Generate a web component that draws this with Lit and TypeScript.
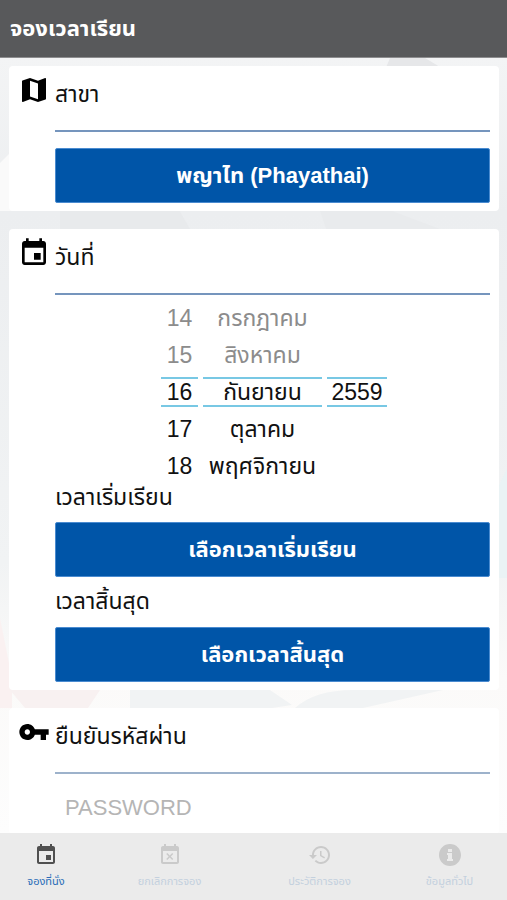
import { LitElement, html, css, svg } from "lit";
import { customElement, state } from "lit/decorators.js";
import { classMap } from "lit/directives/class-map.js";

const icons = {
  map: svg`<path d="M20.5 3l-.16.03L15 5.1 9 3 3.36 4.9c-.21.07-.36.25-.36.48V20.5c0 .28.22.5.5.5l.16-.03L9 18.9l6 2.1 5.640-1.900c.21-.07.36-.25.36-.48V3.500c0-.28-.22-.5-.5-.5zM15 19l-6-2.110V5l6 2.110V19z"/>`,
  event: svg`<path d="M17 12h-5v5h5v-5zM16 1v2H8V1H6v2H5c-1.110 0-1.990.9-1.990 2L3 19c0 1.100.89 2 2 2h14c1.100 0 2-.9 2-2V5c0-1.100-.9-2-2-2h-1V1h-2zm3 18H5V8h14v11z"/>`,
  key: svg`<path d="M12.650 10C11.830 7.670 9.610 6 7 6c-3.310 0-6 2.690-6 6s2.690 6 6 6c2.610 0 4.830-1.670 5.650-4H17v4h4v-4h2v-4H12.650zM7 14c-1.100 0-2-.9-2-2s.9-2 2-2 2 .9 2 2-.9 2-2 2z"/>`,
  busy: svg`<path d="M9.310 17l2.440-2.440L14.190 17l1.060-1.060-2.440-2.440 2.440-2.440L14.190 10l-2.440 2.440L9.310 10l-1.060 1.060 2.440 2.440-2.440 2.440L9.310 17zM19 3h-1V1h-2v2H8V1H6v2H5c-1.110 0-1.990.9-1.990 2L3 19c0 1.100.89 2 2 2h14c1.100 0 2-.9 2-2V5c0-1.100-.9-2-2-2zm0 16H5V8h14v11z"/>`,
  history: svg`<path d="M13 3c-4.970 0-9 4.030-9 9H1l3.890 3.890.07.14L9 12H6c0-3.870 3.130-7 7-7s7 3.130 7 7-3.130 7-7 7c-1.930 0-3.680-.79-4.940-2.060l-1.420 1.420C8.270 19.990 10.510 21 13 21c4.970 0 9-4.030 9-9s-4.030-9-9-9zm-1 5v5l4.280 2.540.72-1.210-3.500-2.080V8H12z"/>`,
  info: svg`<path d="M12 1C5.900 1 1 5.900 1 12s4.900 11 11 11 11-4.900 11-11S18.100 1 12 1zm-2 5h4v3h-4V6zm5 12H9v-2h1v-4H9v-2h5v6h1v2z"/>`,
};

const icon = (name: keyof typeof icons) =>
  html`<svg class="icon" viewBox="0 0 24 24" aria-hidden="true">${icons[name]}</svg>`;

const days = ["14", "15", "16", "17", "18"];
const months = ["กรกฎาคม", "สิงหาคม", "กันยายน", "ตุลาคม", "พฤศจิกายน"];
const years = ["", "", "2559", "", ""];

const tabs: { icon: keyof typeof icons; label: string }[] = [
  { icon: "event", label: "จองที่นั่ง" },
  { icon: "busy", label: "ยกเลิกการจอง" },
  { icon: "history", label: "ประวัติการจอง" },
  { icon: "info", label: "ข้อมูลทั่วไป" },
];

@customElement("app-root")
export class AppRoot extends LitElement {
  @state() private tab = 0;

  static styles = css`
    * {
      box-sizing: border-box;
    }
    :host {
      display: flex;
      flex-direction: column;
      height: 100vh;
      overflow: hidden;
      color: #111;
      background: #fdfdfd;
      font-family: "Liberation Sans", "Noto Sans Thai", sans-serif;
      font-size: 23px;
      line-height: 32px;
    }
    .bar {
      flex: none;
      height: 58px;
      display: flex;
      align-items: center;
      padding: 0 10px;
      background: #58595b;
      border-bottom: 1px solid #8d8d8f;
      color: #fff;
    }
    h1,
    h2 {
      margin: 0;
      font-size: 23px;
      font-weight: 400;
    }
    h1 {
      font-size: 22px;
      font-weight: 700;
    }
    .page {
      flex: 1;
      min-height: 0;
      position: relative;
      overflow: hidden;
    }
    .backdrop {
      position: absolute;
      inset: 0;
      width: 100%;
      height: 100%;
    }
    .cards {
      position: relative;
      display: flex;
      flex-direction: column;
      gap: 18px;
      padding: 8px 8px 0 9px;
    }
    .card {
      display: grid;
      grid-template-columns: 46px minmax(0, 1fr);
      padding: 8px 9px 8px 0;
      border-radius: 4px;
      background: #fff;
    }
    .card > .icon {
      width: 32px;
      height: 32px;
      margin-left: 9px;
      fill: #000;
    }
    .body {
      display: flex;
      flex-direction: column;
    }
    .head {
      height: 58px;
      margin-bottom: 16px;
      padding-top: 4px;
      border-bottom: 2px solid #7595bd;
    }
    .head.soft {
      border-bottom-color: #9db2cb;
    }
    .action {
      height: 55px;
      border: 1px solid #4a8bd0;
      border-radius: 2px;
      background: #0055a8;
      color: #fff;
      font: inherit;
      font-size: 22px;
      font-weight: 700;
      cursor: pointer;
    }
    .picker {
      display: flex;
      justify-content: center;
      gap: 5px;
      margin-top: -8px;
      padding-left: 3px;
    }
    .wheel {
      display: flex;
      flex-direction: column;
      gap: 7px;
      text-align: center;
    }
    .day {
      width: 37px;
    }
    .month {
      width: 119px;
    }
    .year {
      width: 60px;
    }
    .cell {
      height: 30px;
      border: solid transparent;
      border-width: 2px 0;
      line-height: 26px;
      white-space: nowrap;
    }
    .past {
      color: #8c8c8c;
    }
    .current {
      border-color: #78c8e4;
    }
    .label {
      height: 50px;
      padding-top: 8px;
    }
    .label:first-of-type {
      height: 41px;
      padding-top: 0;
    }
    .password {
      width: 100%;
      height: 36px;
      padding: 0 10px;
      border: 0;
      outline: 0;
      background: transparent;
      font: inherit;
      font-size: 22px;
    }
    .password::placeholder {
      color: #b5b5b5;
      opacity: 1;
    }
    .tabs {
      flex: none;
      height: 67px;
      display: grid;
      grid-template-columns: 92fr 155fr 145fr 115fr;
      background: #ebebeb;
    }
    .tab {
      display: flex;
      flex-direction: column;
      align-items: center;
      gap: 4px;
      padding: 10px 0 0;
      border: 0;
      background: none;
      color: #c3d0de;
      font: inherit;
      font-size: 11px;
      line-height: 20px;
      white-space: nowrap;
      cursor: pointer;
    }
    .tab .icon {
      width: 24px;
      height: 24px;
      fill: #cacaca;
    }
    .tab.active {
      color: #2a6db8;
    }
    .tab.active .icon {
      fill: #505050;
    }
  `;

  private wheel(kind: string, label: string, values: string[]) {
    return html`<div class="wheel ${kind}" role="listbox" aria-label=${label}>
      ${values.map(
        (v, i) => html`<div
          class=${classMap({ cell: true, past: i < 2, current: i === 2 })}
          role="option"
          aria-selected=${i === 2}
        >${v}</div>`
      )}
    </div>`;
  }

  render() {
    return html`
      <header class="bar"><h1>จองเวลาเรียน</h1></header>
      <main class="page">
        <svg class="backdrop" viewBox="0 0 507 775" preserveAspectRatio="none" aria-hidden="true">
          <defs>
            <linearGradient id="wash" x1="0" y1="0" x2="0" y2="1">
              <stop offset="0" stop-color="#f3f4f5" />
              <stop offset="0.2" stop-color="#eceef0" />
              <stop offset="0.65" stop-color="#f1f3f4" />
              <stop offset="0.8" stop-color="#fbfaf9" />
              <stop offset="1" stop-color="#fdfdfd" />
            </linearGradient>
          </defs>
          <rect width="507" height="775" fill="url(#wash)" />
          <path d="M390 0h35l20 12h-60z" fill="#e6e7e9" />
          <path d="M0 105l14-14v62H0z" fill="#fafafa" />
          <path d="M60 153l25-8h90l15 26H60z" fill="#e8eaec" />
          <path d="M320 153h72l48 18H326z" fill="#e9ebed" />
          <path d="M493 440l14-30v110h-14z" fill="#eaf3f5" />
          <path d="M0 560l12 60v30H0z" fill="#faf1f1" />
          <path d="M10 632h90l-12 18H25z" fill="#f8f1f1" />
          <path d="M130 632h140l22 15-20 3H130zM295 650q20-18 58-18h90l-80 18z" fill="#f1f3f4" />
        </svg>
        <div class="cards">
          <section class="card">
            ${icon("map")}
            <div class="body">
              <h2 class="head">สาขา</h2>
              <button class="action">พญาไท (Phayathai)</button>
            </div>
          </section>
          <section class="card">
            ${icon("event")}
            <div class="body">
              <h2 class="head">วันที่</h2>
              <div class="picker">
                ${this.wheel("day", "วัน", days)}
                ${this.wheel("month", "เดือน", months)}
                ${this.wheel("year", "ปี", years)}
              </div>
              <label class="label" for="start">เวลาเริ่มเรียน</label>
              <button class="action" id="start">เลือกเวลาเริ่มเรียน</button>
              <label class="label" for="end">เวลาสิ้นสุด</label>
              <button class="action" id="end">เลือกเวลาสิ้นสุด</button>
            </div>
          </section>
          <section class="card">
            ${icon("key")}
            <div class="body">
              <h2 class="head soft"><label for="password">ยืนยันรหัสผ่าน</label></h2>
              <input class="password" id="password" type="password" placeholder="PASSWORD" />
            </div>
          </section>
        </div>
      </main>
      <nav class="tabs">
        ${tabs.map(
          (t, i) => html`<button
            class=${classMap({ tab: true, active: i === this.tab })}
            @click=${() => (this.tab = i)}
          >${icon(t.icon)}<span>${t.label}</span></button>`
        )}
      </nav>
    `;
  }
}
